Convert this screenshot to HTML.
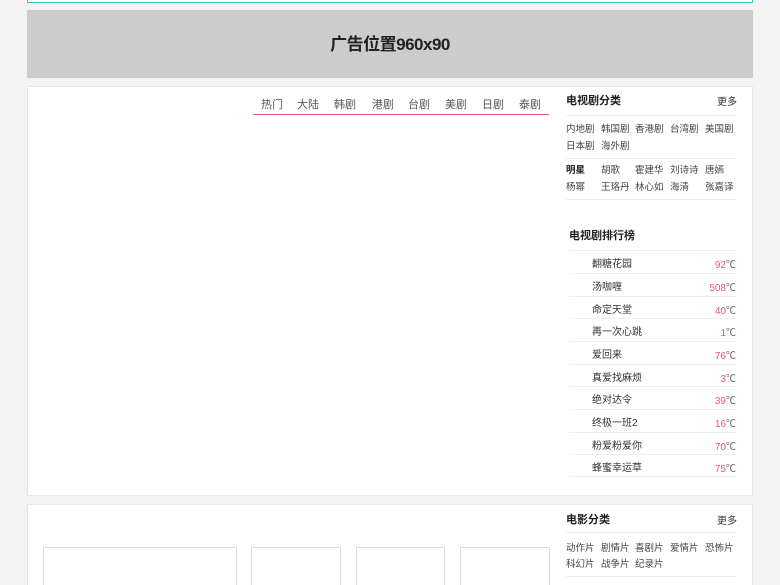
<!DOCTYPE html>
<html><head><meta charset="utf-8"><style>
*{margin:0;padding:0;box-sizing:border-box}
html,body{width:780px;height:585px;overflow:hidden}
body{background:#f3f3f3;font-family:"Liberation Sans","Noto Sans CJK SC",sans-serif;font-size:10px;color:#333;position:relative}
.a{position:absolute}
.top{left:27px;top:-10px;width:726px;height:13px;background:#fff;border:1px solid #3cc;border-top:none}
.ad{left:27px;top:10px;width:726px;height:68px;background:#ccc;text-align:center;line-height:70px;font-size:17px;color:#222;font-weight:bold;letter-spacing:-0.5px}
.panel{left:27px;width:726px;background:#fff;border:1px solid #e6e6e6}
.tabs{left:253px;top:94px;width:296px;height:21px;border-bottom:1.5px solid #e8558a}
.tabs span{position:absolute;top:2px;font-size:11px;color:#555}
.ttl{font-size:11px;font-weight:bold;color:#222}
.more{font-size:10px;color:#333}
.line{height:1px;background:#eee}
.cat span{position:absolute;font-size:9.5px;color:#444}
.rk{left:569px;width:167px;height:22.7px;border-top:1px solid #eee}
.rk b{position:absolute;left:23px;top:4px;font-weight:normal;font-size:10px;color:#333}
.rk i{position:absolute;right:0;top:5px;font-style:normal;font-size:10px;color:#e8558a}
.rk i em{font-style:normal;color:#666}
.box{top:547px;height:50px;border:1px solid #ddd;background:#fff}
</style></head><body>
<div class="a top"></div>
<div class="a ad">广告位置960x90</div>
<div class="a panel" style="top:86px;height:410px"></div>
<div class="a tabs">
<span style="left:8px">热门</span><span style="left:44px">大陆</span><span style="left:81px">韩剧</span><span style="left:119px">港剧</span><span style="left:155px">台剧</span><span style="left:192px">美剧</span><span style="left:229px">日剧</span><span style="left:266px">泰剧</span>
</div>
<div class="a ttl" style="left:566px;top:92px">电视剧分类</div>
<div class="a more" style="left:717px;top:93px">更多</div>
<div class="a line" style="left:566px;top:115px;width:170px"></div>
<div class="a cat" style="left:566px;top:121px;width:170px">
<span style="left:0;top:0">内地剧</span><span style="left:35px;top:0">韩国剧</span><span style="left:69px;top:0">香港剧</span><span style="left:104px;top:0">台湾剧</span><span style="left:139px;top:0">美国剧</span>
<span style="left:0;top:17px">日本剧</span><span style="left:35px;top:17px">海外剧</span>
</div>
<div class="a line" style="left:566px;top:158px;width:170px"></div>
<div class="a cat" style="left:566px;top:162px;width:170px">
<span style="left:0;top:0;font-weight:bold;color:#222">明星</span><span style="left:35px;top:0">胡歌</span><span style="left:69px;top:0">霍建华</span><span style="left:104px;top:0">刘诗诗</span><span style="left:139px;top:0">唐嫣</span>
<span style="left:0;top:17px">杨幂</span><span style="left:35px;top:17px">王珞丹</span><span style="left:69px;top:17px">林心如</span><span style="left:104px;top:17px">海清</span><span style="left:139px;top:17px">张嘉译</span>
</div>
<div class="a line" style="left:566px;top:199px;width:170px"></div>
<div class="a ttl" style="left:569px;top:227px">电视剧排行榜</div>
<div class="a rk" style="top:250px"><b>翻糖花园</b><i>92<em>℃</em></i></div>
<div class="a rk" style="top:273px"><b>汤咖喱</b><i>508<em>℃</em></i></div>
<div class="a rk" style="top:296px"><b>命定天堂</b><i>40<em>℃</em></i></div>
<div class="a rk" style="top:318px"><b>再一次心跳</b><i>1<em>℃</em></i></div>
<div class="a rk" style="top:341px"><b>爱回来</b><i>76<em>℃</em></i></div>
<div class="a rk" style="top:364px"><b>真爱找麻烦</b><i>3<em>℃</em></i></div>
<div class="a rk" style="top:386px"><b>绝对达令</b><i>39<em>℃</em></i></div>
<div class="a rk" style="top:409px"><b>终极一班2</b><i>16<em>℃</em></i></div>
<div class="a rk" style="top:432px"><b>粉爱粉爱你</b><i>70<em>℃</em></i></div>
<div class="a rk" style="top:454px;border-bottom:1px solid #eee"><b>蜂蜜幸运草</b><i>75<em>℃</em></i></div>

<div class="a panel" style="top:504px;height:90px"></div>
<div class="a ttl" style="left:566px;top:511px">电影分类</div>
<div class="a more" style="left:717px;top:512px">更多</div>
<div class="a line" style="left:566px;top:532px;width:170px"></div>
<div class="a cat" style="left:566px;top:540px;width:170px">
<span style="left:0;top:0">动作片</span><span style="left:35px;top:0">剧情片</span><span style="left:69px;top:0">喜剧片</span><span style="left:104px;top:0">爱情片</span><span style="left:139px;top:0">恐怖片</span>
<span style="left:0;top:16px">科幻片</span><span style="left:35px;top:16px">战争片</span><span style="left:69px;top:16px">纪录片</span>
</div>
<div class="a line" style="left:566px;top:576px;width:170px"></div>
<div class="a box" style="left:43px;width:194px"></div>
<div class="a box" style="left:251px;width:90px"></div>
<div class="a box" style="left:356px;width:89px"></div>
<div class="a box" style="left:460px;width:90px"></div>
</body></html>
